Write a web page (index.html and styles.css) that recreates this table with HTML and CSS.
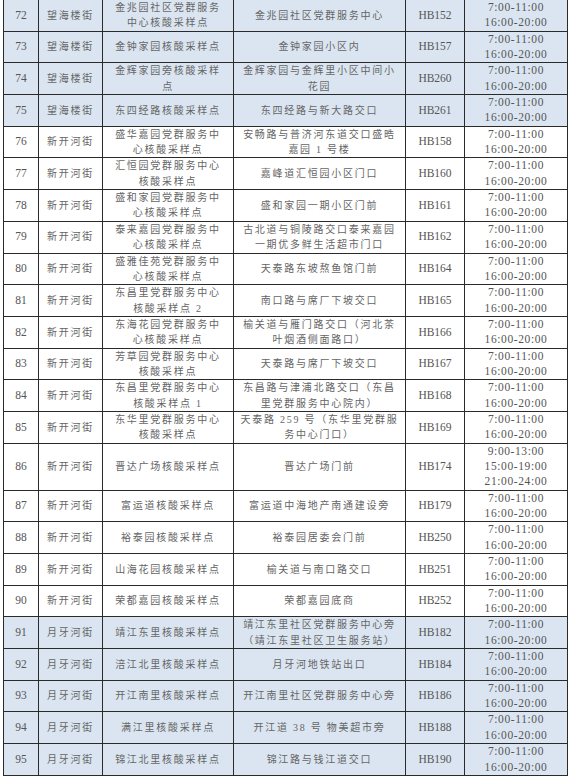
FILE: index.html
```html
<!DOCTYPE html>
<html lang="zh-CN">
<head>
<meta charset="utf-8">
<title>核酸采样点</title>
<link rel="stylesheet" href="styles.css">
</head>
<body>
<table class="tbl">
<colgroup>
<col class="c1"><col class="c2"><col class="c3"><col class="c4"><col class="c5"><col class="c6">
</colgroup>
<tbody>
<tr class="blue"><td class="num">72</td><td>望海楼街</td><td>金兆园社区党群服务<br>中心核酸采样点</td><td>金兆园社区党群服务中心</td><td class="num">HB152</td><td class="time">7:00-11:00<br>16:00-20:00</td></tr>
<tr class="blue"><td class="num">73</td><td>望海楼街</td><td>金钟家园核酸采样点</td><td>金钟家园小区内</td><td class="num">HB157</td><td class="time">7:00-11:00<br>16:00-20:00</td></tr>
<tr class="blue"><td class="num">74</td><td>望海楼街</td><td>金辉家园旁核酸采样<br>点</td><td>金辉家园与金辉里小区中间小<br>花园</td><td class="num">HB260</td><td class="time">7:00-11:00<br>16:00-20:00</td></tr>
<tr class="blue"><td class="num">75</td><td>望海楼街</td><td>东四经路核酸采样点</td><td>东四经路与新大路交口</td><td class="num">HB261</td><td class="time">7:00-11:00<br>16:00-20:00</td></tr>
<tr><td class="num">76</td><td>新开河街</td><td>盛华嘉园党群服务中<br>心核酸采样点</td><td>安畅路与普济河东道交口盛晧<br>嘉园 1 号楼</td><td class="num">HB158</td><td class="time">7:00-11:00<br>16:00-20:00</td></tr>
<tr><td class="num">77</td><td>新开河街</td><td>汇恒园党群服务中心<br>核酸采样点</td><td>嘉峰道汇恒园小区门口</td><td class="num">HB160</td><td class="time">7:00-11:00<br>16:00-20:00</td></tr>
<tr><td class="num">78</td><td>新开河街</td><td>盛和家园党群服务中<br>心核酸采样点</td><td>盛和家园一期小区门前</td><td class="num">HB161</td><td class="time">7:00-11:00<br>16:00-20:00</td></tr>
<tr><td class="num">79</td><td>新开河街</td><td>泰来嘉园党群服务中<br>心核酸采样点</td><td>古北道与铜陵路交口泰来嘉园<br>一期优多鲜生活超市门口</td><td class="num">HB162</td><td class="time">7:00-11:00<br>16:00-20:00</td></tr>
<tr><td class="num">80</td><td>新开河街</td><td>盛雅佳苑党群服务中<br>心核酸采样点</td><td>天泰路东坡熬鱼馆门前</td><td class="num">HB164</td><td class="time">7:00-11:00<br>16:00-20:00</td></tr>
<tr><td class="num">81</td><td>新开河街</td><td>东昌里党群服务中心<br>核酸采样点 2</td><td>南口路与席厂下坡交口</td><td class="num">HB165</td><td class="time">7:00-11:00<br>16:00-20:00</td></tr>
<tr><td class="num">82</td><td>新开河街</td><td>东海花园党群服务中<br>心核酸采样点</td><td>榆关道与雁门路交口（河北茶<br>叶烟酒侧面路口）</td><td class="num">HB166</td><td class="time">7:00-11:00<br>16:00-20:00</td></tr>
<tr><td class="num">83</td><td>新开河街</td><td>芳草园党群服务中心<br>核酸采样点</td><td>天泰路与席厂下坡交口</td><td class="num">HB167</td><td class="time">7:00-11:00<br>16:00-20:00</td></tr>
<tr><td class="num">84</td><td>新开河街</td><td>东昌里党群服务中心<br>核酸采样点 1</td><td>东昌路与津浦北路交口（东昌<br>里党群服务中心院内）</td><td class="num">HB168</td><td class="time">7:00-11:00<br>16:00-20:00</td></tr>
<tr><td class="num">85</td><td>新开河街</td><td>东华里党群服务中心<br>核酸采样点</td><td>天泰路 259 号（东华里党群服<br>务中心门口）</td><td class="num">HB169</td><td class="time">7:00-11:00<br>16:00-20:00</td></tr>
<tr><td class="num">86</td><td>新开河街</td><td>晋达广场核酸采样点</td><td>晋达广场门前</td><td class="num">HB174</td><td class="time">9:00-13:00<br>15:00-19:00<br>21:00-24:00</td></tr>
<tr><td class="num">87</td><td>新开河街</td><td>富运道核酸采样点</td><td>富运道中海地产南通建设旁</td><td class="num">HB179</td><td class="time">7:00-11:00<br>16:00-20:00</td></tr>
<tr><td class="num">88</td><td>新开河街</td><td>裕泰园核酸采样点</td><td>裕泰园居委会门前</td><td class="num">HB250</td><td class="time">7:00-11:00<br>16:00-20:00</td></tr>
<tr><td class="num">89</td><td>新开河街</td><td>山海花园核酸采样点</td><td>榆关道与南口路交口</td><td class="num">HB251</td><td class="time">7:00-11:00<br>16:00-20:00</td></tr>
<tr><td class="num">90</td><td>新开河街</td><td>荣都嘉园核酸采样点</td><td>荣都嘉园底商</td><td class="num">HB252</td><td class="time">7:00-11:00<br>16:00-20:00</td></tr>
<tr class="blue"><td class="num">91</td><td>月牙河街</td><td>靖江东里核酸采样点</td><td>靖江东里社区党群服务中心旁<br>（靖江东里社区卫生服务站）</td><td class="num">HB182</td><td class="time">7:00-11:00<br>16:00-20:00</td></tr>
<tr class="blue"><td class="num">92</td><td>月牙河街</td><td>涪江北里核酸采样点</td><td>月牙河地铁站出口</td><td class="num">HB184</td><td class="time">7:00-11:00<br>16:00-20:00</td></tr>
<tr class="blue"><td class="num">93</td><td>月牙河街</td><td>开江南里核酸采样点</td><td>开江南里社区党群服务中心旁</td><td class="num">HB186</td><td class="time">7:00-11:00<br>16:00-20:00</td></tr>
<tr class="blue"><td class="num">94</td><td>月牙河街</td><td>满江里核酸采样点</td><td>开江道 38 号 物美超市旁</td><td class="num">HB188</td><td class="time">7:00-11:00<br>16:00-20:00</td></tr>
<tr class="blue"><td class="num">95</td><td>月牙河街</td><td>锦江北里核酸采样点</td><td>锦江路与钱江道交口</td><td class="num">HB190</td><td class="time">7:00-11:00<br>16:00-20:00</td></tr>
</tbody>
</table>
</body>
</html>
```

FILE: styles.css
```css
html, body {
  margin: 0;
  padding: 0;
  background: #ffffff;
}

.tbl {
  margin: 0 0 0 3px;
  width: 565px;
  table-layout: fixed;
  border-collapse: collapse;
  font-family: "Liberation Serif", "Noto Sans CJK SC", serif;
  font-size: 10px;
  line-height: 15.35px;
  color: #656565;
}

.c1 { width: 35px; }
.c2 { width: 64px; }
.c3 { width: 131px; }
.c4 { width: 172px; }
.c5 { width: 59px; }
.c6 { width: 103px; }

.tbl td {
  border: 1px solid #2a2a2a;
  padding: 0 2px;
  text-align: center;
  vertical-align: middle;
  letter-spacing: 1.75px;
  white-space: nowrap;
  overflow: hidden;
}

.tbl tr:first-child td {
  border-top: 0;
}

.tbl td.num {
  font-size: 11.5px;
  letter-spacing: 0;
  color: #555555;
}

.tbl td.time {
  font-size: 11.5px;
  letter-spacing: 0.6px;
  color: #555555;
}

.tbl tr.blue td {
  background: #dbe5f1;
}
```
